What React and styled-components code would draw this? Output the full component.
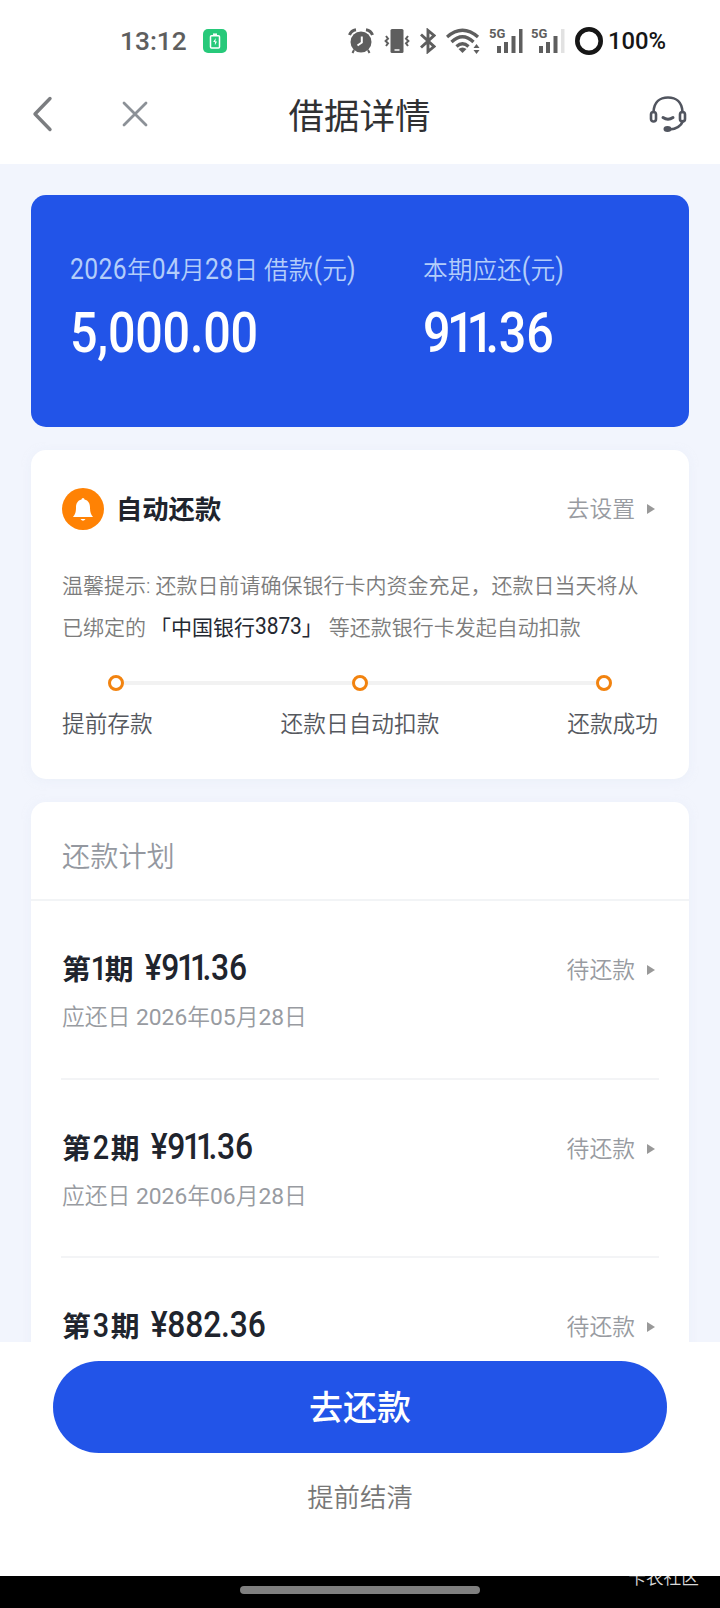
import styled, { createGlobalStyle } from "styled-components";

const parcelas = [
  { numero: "1", valor: ["9", "11", ".36"], data: ["2026", "05", "28"] },
  { numero: "2", valor: ["9", "11", ".36"], data: ["2026", "06", "28"] },
  { numero: "3", valor: ["882.36"] },
];

function Valor({ partes }) {
  return partes.map((parte) => (
    <Digitos key={parte} $juntos={parte === "11"}>{parte}</Digitos>
  ));
}

function StatusBar() {
  return (
    <StyleStatus>
      <Hora>13:12</Hora>
      <BateriaVerde>
        <svg width="12" height="16" viewBox="0 0 12 16" fill="none" stroke="#fff" strokeWidth="1.5">
          <rect x="1.5" y="2.8" width="9" height="12.2" rx="1" />
          <path d="M4 1.2h4" />
          <path d="M6.8 5 4.2 9h1.7v3.2L8 8.4H6.3z" fill="#fff" stroke="none" />
        </svg>
      </BateriaVerde>
      <Indicadores>
        <svg width="26" height="26" viewBox="0 0 26 26" fill="none" stroke="#5e5e5e">
          <circle cx="13" cy="14" r="10.5" fill="#5e5e5e" stroke="none" />
          <path d="M1.5 7Q3 2.5 8 1.7M24.5 7Q23 2.5 18 1.7" strokeWidth="3" />
          <path d="m6 22-1.5 3M20 22l1.5 3" strokeWidth="2" />
          <path d="M13.8 8.5v6l-4.3 3" stroke="#fff" strokeWidth="2" />
        </svg>
        <svg width="26" height="26" viewBox="0 0 26 26" fill="none" stroke="#5e5e5e">
          <rect x="6.5" y="1" width="13" height="24" rx="1.5" fill="#5e5e5e" stroke="none" />
          <path d="M10.5 22h5" stroke="#fff" strokeWidth="1.5" />
          <path d="m2 8 2 2.6-2.4 2.4L4 15.4 2 18M24 8l-2 2.6 2.4 2.4-2.4 2.4 2 2.6" strokeWidth="2" />
        </svg>
        <svg width="16" height="26" viewBox="0 0 16 26" fill="none" stroke="#5e5e5e" strokeWidth="2.9">
          <path d="m1 6.5 13 12-6 5V2.5l6 5-13 12" />
        </svg>
        <svg width="34" height="26" viewBox="0 0 34 26" fill="none" stroke="#5e5e5e" strokeWidth="3.3">
          <path d="M1 9Q16.500-4.500 32 9M5.500 14Q16.500 3.500 27.500 14M10.500 18.500Q16.500 13 22.500 18.500" />
          <path d="M16.500 25 12.500 21Q16.500 18 20.500 21z" fill="#5e5e5e" stroke="none" />
          <path d="m30.500 16 3 4h-6zM30.500 26l3-4h-6z" fill="#5e5e5e" stroke="none" />
        </svg>
        <Sinal>
          <small>5G</small>
          <svg width="33" height="26" viewBox="0 0 33 26" fill="#5e5e5e">
            <path d="M7 18h4v7H7zM14 14h4v11h-4zM21.500 8h4v17h-4zM29 1h3.500v24H29z" />
          </svg>
        </Sinal>
        <Sinal>
          <small>5G</small>
          <svg width="33" height="26" viewBox="0 0 33 26" fill="#5e5e5e">
            <path d="M7 18h4v7H7zM14 14h4v11h-4zM21.500 8h4v17h-4z" />
            <path d="M29 1h3.500v24H29z" fill="#e2e2e2" />
          </svg>
        </Sinal>
        <svg width="28" height="28" viewBox="0 0 28 28">
          <circle cx="14" cy="14" r="11.700" fill="none" stroke="#161616" strokeWidth="4.600" />
        </svg>
        <Porcentagem>100%</Porcentagem>
      </Indicadores>
    </StyleStatus>
  );
}

function Cabecalho() {
  return (
    <StyleCabecalho>
      <BotaoIcone>
        <svg width="22" height="36" viewBox="0 0 22 36" fill="none" stroke="#7b7d80" strokeWidth="3.400" strokeLinecap="round" strokeLinejoin="round">
          <path d="M19 2.500 4 18l15 15.500" />
        </svg>
      </BotaoIcone>
      <BotaoIcone>
        <svg width="26" height="26" viewBox="0 0 26 26" fill="none" stroke="#8c9197" strokeWidth="2.800" strokeLinecap="round">
          <path d="m2 2 22 22M24 2 2 24" />
        </svg>
      </BotaoIcone>
      <h1>借据详情</h1>
      <BotaoIcone>
        <svg width="38" height="38" viewBox="0 0 38 38" fill="none" stroke="#51555f" strokeWidth="2.600" strokeLinecap="round">
          <path d="M4.500 17C5 7 11 2.500 19 2.500S33 7 33.500 17M34 26c-2 5-7 8-13.500 8.500" />
          <rect x="2" y="17" width="5" height="9.500" rx="2.500" />
          <rect x="31" y="17" width="5" height="9.500" rx="2.500" />
          <path d="M14 22.500q5 3.500 10 0" strokeWidth="3" />
          <ellipse cx="18.500" cy="34" rx="4" ry="2.900" fill="#51555f" stroke="none" />
        </svg>
      </BotaoIcone>
    </StyleCabecalho>
  );
}

export default function App() {
  return (
    <Tela>
      <GlobalStyle />
      <StatusBar />
      <Cabecalho />
      <Conteudo>
        <CardResumo>
          <div>
            <p>
              <Digitos>2026</Digitos>年<Digitos>04</Digitos>月<Digitos>28</Digitos>日 借款<Digitos>(</Digitos>元<Digitos>)</Digitos>
            </p>
            <strong><Digitos>5,000.00</Digitos></strong>
          </div>
          <div>
            <p>本期应还<Digitos>(</Digitos>元<Digitos>)</Digitos></p>
            <strong><Valor partes={["9", "11", ".36"]} /></strong>
          </div>
        </CardResumo>

        <CardAutomatico>
          <Topo>
            <Sino>
              <svg width="22" height="25" viewBox="0 0 22 25" fill="#fff">
                <path d="M9.500 2.500a1.500 1.500 0 0 1 3 0c4 1 5.500 4 5.500 8 0 5 1 7 3 9.500H1c2-2.500 3-4.500 3-9.500 0-4 1.500-7 5.500-8zM8.500 22h5q-2.500 3.500-5 0z" />
              </svg>
            </Sino>
            <h2>自动还款</h2>
            <Acao>去设置<Seta /></Acao>
          </Topo>
          <Dica>
            温馨提示: 还款日前请确保银行卡内资金充足，还款日当天将从<br />
            已绑定的<b>「中国银行<Digitos>3873</Digitos>」</b>等还款银行卡发起自动扣款
          </Dica>
          <Linha>
            <Ponto />
            <Ponto />
            <Ponto />
          </Linha>
          <Etapas>
            <span>提前存款</span>
            <span>还款日自动扣款</span>
            <span>还款成功</span>
          </Etapas>
        </CardAutomatico>

        <CardPlano>
          <h3>还款计划</h3>
          {parcelas.map(({ numero, valor, data }) => (
            <Parcela key={numero}>
              <div>
                <h4>
                  第<Periodo $estreito={numero === "1"}>{numero}</Periodo>期
                  <Preco><Digitos>¥</Digitos><Valor partes={valor} /></Preco>
                </h4>
                {data && (
                  <p>
                    应还日 <span>{data[0]}</span>年<span>{data[1]}</span>月<span>{data[2]}</span>日
                  </p>
                )}
              </div>
              <Acao>待还款<Seta /></Acao>
            </Parcela>
          ))}
        </CardPlano>
      </Conteudo>

      <Rodape>
        <BotaoPagar>去还款</BotaoPagar>
        <BotaoQuitar>提前结清</BotaoQuitar>
      </Rodape>
      <BarraSistema>
        <i />
        <Marca>卡农社区</Marca>
      </BarraSistema>
    </Tela>
  );
}

const GlobalStyle = createGlobalStyle`
  body {
    margin: 0;
    background: #fff;
  }
  * {
    box-sizing: border-box;
  }
  h1, h2, h3, h4, p {
    margin: 0;
  }
  button {
    border: none;
    padding: 0;
    background: none;
    font-family: inherit;
  }
  svg {
    display: block;
    flex: none;
  }
`;

const Tela = styled.div`
  width: 720px;
  height: 1608px;
  overflow: hidden;
  display: flex;
  flex-direction: column;
  background: #fff;
  font-family: Roboto, "Noto Sans CJK SC", sans-serif;
  font-weight: 350;
  white-space: nowrap;
`;

/* tall narrow numerals */
const Digitos = styled.span`
  display: inline-block;
  transform: scaleY(1.16);
  transform-origin: 50% 78%;
  letter-spacing: ${({ $juntos }) => ($juntos ? "-0.165em" : "-0.005em")};
  margin-left: ${({ $juntos }) => ($juntos ? "-0.07em" : "0")};
  margin-right: ${({ $juntos }) => ($juntos ? "-0.01em" : "0")};
`;

const Periodo = styled(Digitos)`
  width: ${({ $estreito }) => ($estreito ? "14px" : "20px")};
  text-align: center;
  font-weight: 500;
`;

const StyleStatus = styled.div`
  height: 82px;
  flex: none;
  display: flex;
  align-items: center;
  padding-left: 120px;
`;

const Hora = styled.span`
  width: 83px;
  font-size: 26.3px;
  font-weight: 500;
  color: #5e5e5e;
`;

const BateriaVerde = styled.span`
  width: 24px;
  height: 24px;
  border-radius: 5px;
  background: #27c97a;
  display: flex;
  align-items: center;
  justify-content: center;
`;

const Indicadores = styled.div`
  margin-left: 121px;
  display: flex;
  align-items: center;
  gap: 10px;
`;

const Sinal = styled.span`
  position: relative;
  width: 33px;

  & + & {
    margin-left: -1px;
  }
  & small {
    position: absolute;
    left: -1px;
    top: 0;
    font-size: 13px;
    line-height: 11px;
    font-weight: 700;
    color: #5e5e5e;
  }
`;

const Porcentagem = styled.span`
  margin-left: -5px;
  font-size: 23.8px;
  font-weight: 500;
  color: #161616;
`;

const StyleCabecalho = styled.header`
  height: 82px;
  flex: none;
  display: grid;
  grid-template-columns: 91px 69px 1fr 160px;
  align-items: center;
  padding: 0 33px 19px 31px;

  & h1 {
    font-size: 35.5px;
    font-weight: 400;
    line-height: 50px;
    text-align: center;
    color: #303133;
    padding: 6px 0 0 1px;
  }
  & button:last-child {
    justify-self: end;
  }
`;

const BotaoIcone = styled.button`
  justify-self: start;
`;

const Conteudo = styled.main`
  height: 1178px;
  flex: none;
  overflow: hidden;
  background: #f2f5fd;
  padding: 31px 31px 0;
`;

const CardResumo = styled.section`
  height: 232px;
  border-radius: 15px;
  background: #2254e8;
  color: #fff;
  display: grid;
  grid-template-columns: 353px 1fr;
  padding: 58px 0 0 39px;

  & p {
    font-size: 24.7px;
    line-height: 36px;
    color: #b3cdfa;
  }
  & p ${Digitos} {
    font-weight: 400;
    letter-spacing: 0.015em;
  }
  & strong {
    display: block;
    font-size: 48.5px;
    line-height: 58px;
    font-weight: 500;
    margin-top: 18px;
  }
`;

const Card = styled.section`
  background: #fff;
  border-radius: 15px;
  margin-top: 23px;
  box-shadow: 0 2px 8px #e6ecf880;
`;

const CardAutomatico = styled(Card)`
  height: 329px;
  padding: 37px 31px 0;
`;

const Topo = styled.div`
  display: flex;
  align-items: center;
  height: 44px;

  & h2 {
    margin-left: 12px;
    padding-bottom: 3px;
    font-size: 26.3px;
    font-weight: 700;
    color: #20242d;
  }
`;

const Sino = styled.span`
  width: 42px;
  height: 42px;
  border-radius: 50%;
  background: #ff8204;
  display: flex;
  align-items: center;
  justify-content: center;
`;

const Acao = styled.span`
  margin-left: auto;
  display: flex;
  align-items: center;
  font-size: 22.8px;
  line-height: 34px;
  padding-top: 2px;
  color: #989ba1;
`;

const Seta = styled.i`
  margin: -2px 3px 0 12px;
  border-left: 8px solid #999;
  border-top: 5.5px solid transparent;
  border-bottom: 5.5px solid transparent;
`;

const Dica = styled.p`
  margin-top: 34px;
  font-size: 21px;
  line-height: 42px;
  color: #7c7c7c;

  & b {
    font-weight: 400;
    color: #252932;
    margin: 0 6px 0 4px;
  }
`;

const Linha = styled.div`
  height: 15px;
  margin: 26px 46px 0;
  display: flex;
  justify-content: space-between;
  background: linear-gradient(#f2f2f2, #f2f2f2) center / 100% 4px no-repeat;
`;

const Ponto = styled.span`
  width: 16px;
  height: 16px;
  border: 3.5px solid #f2830f;
  border-radius: 50%;
  background: #fff;
`;

const Etapas = styled.div`
  margin-top: 17px;
  display: flex;
  justify-content: space-between;
  font-size: 22.7px;
  line-height: 36px;
  color: #55585e;
`;

const CardPlano = styled(Card)`
  & h3 {
    height: 99px;
    padding: 12px 31px 0;
    border-bottom: 2px solid #f2f4f6;
    font-size: 28.2px;
    line-height: 88px;
    font-weight: 350;
    color: #9498a0;
  }
`;

const Parcela = styled.div`
  height: 178.5px;
  margin: 0 30px;
  padding: 52px 1px 0;
  border-bottom: 2px solid #f3f4f6;
  display: flex;
  align-items: flex-start;

  & h4 {
    height: 32px;
    font-size: 28.8px;
    line-height: 32px;
    font-weight: 700;
    color: #20242d;
  }
  & p {
    margin-top: 16px;
    font-size: 22.8px;
    line-height: 34px;
    color: #989ba1;
  }
  & p span {
    font-weight: 400;
  }
  & ${Acao} {
    margin-top: -1px;
  }
`;

const Preco = styled.span`
  margin-left: 11px;
  font-size: 31.8px;
  font-weight: 500;

  & ${Digitos} {
    transform-origin: 50% 90%;
  }
`;

const Rodape = styled.footer`
  height: 234px;
  flex: none;
  padding: 19px 53px 0;
  display: flex;
  flex-direction: column;
`;

const BotaoPagar = styled.button`
  height: 92px;
  border-radius: 46px;
  background: #2254e8;
  color: #fff;
  font-size: 34px;
  font-weight: 500;
  padding-bottom: 4px;
`;

const BotaoQuitar = styled.button`
  margin-top: 25px;
  font-size: 26.4px;
  line-height: 40px;
  font-weight: 350;
  color: #777;
`;

const BarraSistema = styled.div`
  position: relative;
  height: 32px;
  flex: none;
  overflow: hidden;
  background: #000;
  display: flex;
  justify-content: center;
  padding-top: 10px;

  & i {
    width: 240px;
    height: 8px;
    border-radius: 4px;
    background: #808080;
  }
`;

const Marca = styled.span`
  position: absolute;
  right: 21px;
  top: -11px;
  font-size: 17.7px;
  line-height: 26px;
  color: #d8d8d8;
`;
